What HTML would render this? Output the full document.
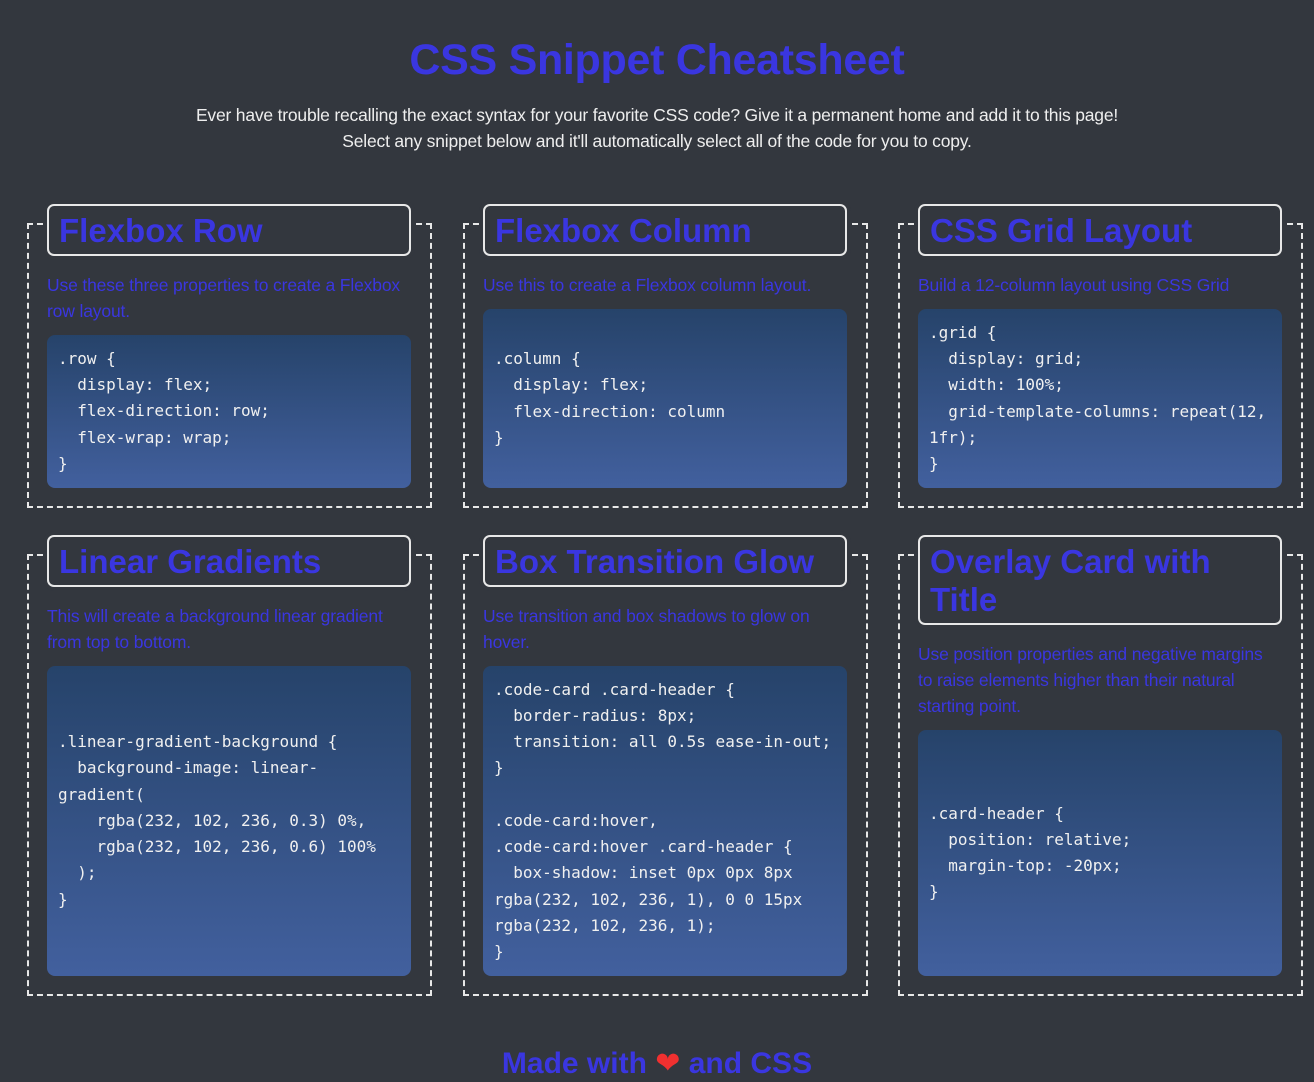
<!DOCTYPE html>
<html><head><meta charset="utf-8"><style>
*{box-sizing:border-box;margin:0;padding:0}
body{width:1314px;height:1082px;background:#33373e;font-family:"Liberation Sans",sans-serif;position:relative;overflow:hidden;color:#eee}
h1{position:absolute;top:36px;left:0;width:1314px;text-align:center;color:#3a36e0;font-size:43px;font-weight:bold;letter-spacing:-0.3px}
.sub{position:absolute;top:102px;left:0;width:1314px;text-align:center;font-size:17.5px;letter-spacing:-0.2px;line-height:26px;color:#eee}
.card{position:absolute;width:405px;border:2px dashed #e8e8e8;padding:0 19px 18px 18px;display:flex;flex-direction:column}
.hd{margin-top:-21px;border:2px solid #e8e8e8;border-radius:7px;padding:6px 10px 4px;color:#3a36e0;font-size:33px;font-weight:bold;line-height:38px;background:#33373e;box-shadow:0 0 0 4px #33373e}
.ds{color:#3a36e0;font-size:17.5px;letter-spacing:-0.15px;line-height:26px;margin-top:16px;margin-bottom:11px}
.cd{flex:1;border-radius:8px;background:linear-gradient(#26436a,#42609e);display:flex;align-items:center;padding:10px 11px}
pre{font-family:"DejaVu Sans Mono","Liberation Mono",monospace;font-size:16px;line-height:26.2px;color:#f0f0f0;white-space:pre-wrap;word-break:normal}
.ft{position:absolute;top:1046px;left:0;width:1314px;text-align:center;color:#3a36e0;font-size:30px;font-weight:bold}
</style></head><body>
<h1>CSS Snippet Cheatsheet</h1>
<div class="sub">Ever have trouble recalling the exact syntax for your favorite CSS code? Give it a permanent home and add it to this page!<br>Select any snippet below and it'll automatically select all of the code for you to copy.</div>

<div class="card" style="left:27px;top:223px;height:285px"><div class="hd">Flexbox Row</div><div class="ds">Use these three properties to create a Flexbox row layout.</div><div class="cd"><pre>.row {
  display: flex;
  flex-direction: row;
  flex-wrap: wrap;
}</pre></div></div>

<div class="card" style="left:463px;top:223px;height:285px"><div class="hd">Flexbox Column</div><div class="ds">Use this to create a Flexbox column layout.</div><div class="cd"><pre>.column {
  display: flex;
  flex-direction: column
}</pre></div></div>

<div class="card" style="left:898px;top:223px;height:285px"><div class="hd">CSS Grid Layout</div><div class="ds">Build a 12-column layout using CSS Grid</div><div class="cd"><pre>.grid {
  display: grid;
  width: 100%;
  grid-template-columns: repeat(12, 1fr);
}</pre></div></div>

<div class="card" style="left:27px;top:554px;height:442px"><div class="hd">Linear Gradients</div><div class="ds">This will create a background linear gradient from top to bottom.</div><div class="cd"><pre>.linear-gradient-background {
  background-image: linear-
gradient(
    rgba(232, 102, 236, 0.3) 0%,
    rgba(232, 102, 236, 0.6) 100%
  );
}</pre></div></div>

<div class="card" style="left:463px;top:554px;height:442px"><div class="hd">Box Transition Glow</div><div class="ds">Use transition and box shadows to glow on hover.</div><div class="cd"><pre>.code-card .card-header {
  border-radius: 8px;
  transition: all 0.5s ease-in-out;
}

.code-card:hover,
.code-card:hover .card-header {
  box-shadow: inset 0px 0px 8px rgba(232, 102, 236, 1), 0 0 15px rgba(232, 102, 236, 1);
}</pre></div></div>

<div class="card" style="left:898px;top:554px;height:442px"><div class="hd">Overlay Card with Title</div><div class="ds">Use position properties and negative margins<br>to raise elements higher than their natural<br>starting point.</div><div class="cd"><pre>.card-header {
  position: relative;
  margin-top: -20px;
}</pre></div></div>

<div class="ft">Made with <span style="color:#f03030;font-family:'DejaVu Sans',sans-serif">❤</span> and CSS</div>
</body></html>
